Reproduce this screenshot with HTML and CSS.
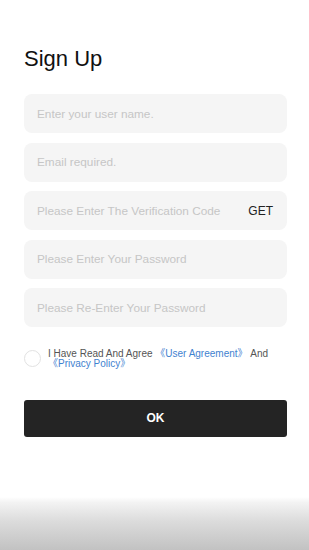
FILE: index.html
```html
<!DOCTYPE html>
<html lang="en">
<head>
  <meta charset="UTF-8">
  <meta name="viewport" content="width=device-width, initial-scale=1.0">
  <title>Sign Up</title>
  <link rel="stylesheet" href="styles.css">
</head>
<body>
  <div class="page">
    <main class="signup">
      <h1 class="title">Sign Up</h1>
      <form class="form">
        <div class="field">
          <input type="text" placeholder="Enter your user name.">
        </div>
        <div class="field">
          <input type="email" placeholder="Email required.">
        </div>
        <div class="field">
          <input type="text" placeholder="Please Enter The Verification Code">
          <span class="get">GET</span>
        </div>
        <div class="field">
          <input type="password" placeholder="Please Enter Your Password">
        </div>
        <div class="field">
          <input type="password" placeholder="Please Re-Enter Your Password">
        </div>
        <label class="agree">
          <span class="radio"></span>
          <span class="agree-text">I Have Read And Agree <a href="#">《User Agreement》</a> And <a href="#">《Privacy Policy》</a></span>
        </label>
        <button type="button" class="ok">OK</button>
      </form>
    </main>
    <div class="bottom-fade"></div>
  </div>
</body>
</html>
```

FILE: styles.css
```css
:root {
  --input-bg: #f5f5f5;
  --placeholder: #c6c6c6;
  --text: #111;
  --muted: #555;
  --link: #3f82d0;
  --dark: #242424;
}
* {
  box-sizing: border-box;
}
body {
  margin: 0;
  font-family: 'Liberation Sans', Arial, 'Noto Sans CJK SC', sans-serif;
  background: #fff;
  color: var(--text);
}
.page {
  min-height: 550px;
  display: flex;
  flex-direction: column;
}
.signup {
  padding: 0 22px 0 24px;
}
.title {
  margin: 0;
  padding-top: 46px;
  font-size: 22px;
  line-height: 26px;
  font-weight: normal;
}
.form {
  margin-top: 22px;
  display: flex;
  flex-direction: column;
}
.field {
  display: flex;
  align-items: center;
  height: 39px;
  margin-bottom: 9.5px;
  padding: 0 14px 0 13px;
  background: var(--input-bg);
  border-radius: 8px;
}
.field input {
  flex: 1;
  min-width: 0;
  border: none;
  background: transparent;
  outline: none;
  padding: 0;
  font-family: inherit;
  font-size: 11.8px;
  color: var(--text);
}
.field input::placeholder {
  color: var(--placeholder);
}
.get {
  font-size: 12px;
  color: #222;
}
.agree {
  display: flex;
  align-items: center;
  margin-top: 12px;
  gap: 7px;
  font-size: 10px;
  line-height: 10px;
  color: var(--muted);
}
.radio {
  flex: none;
  width: 17px;
  height: 17px;
  border: 1px solid #e2e2e2;
  border-radius: 50%;
  background: #fff;
}
.agree a {
  color: var(--link);
  text-decoration: none;
}
.ok {
  margin-top: 31px;
  height: 37px;
  border: none;
  border-radius: 3px;
  background: var(--dark);
  color: #fff;
  font-family: inherit;
  font-size: 12px;
  font-weight: bold;
}
.bottom-fade {
  margin-top: auto;
  height: 53px;
  background: linear-gradient(#fff, #f3f3f3 10%, #dcdcdc 45%, #c2c2c2);
}
```
